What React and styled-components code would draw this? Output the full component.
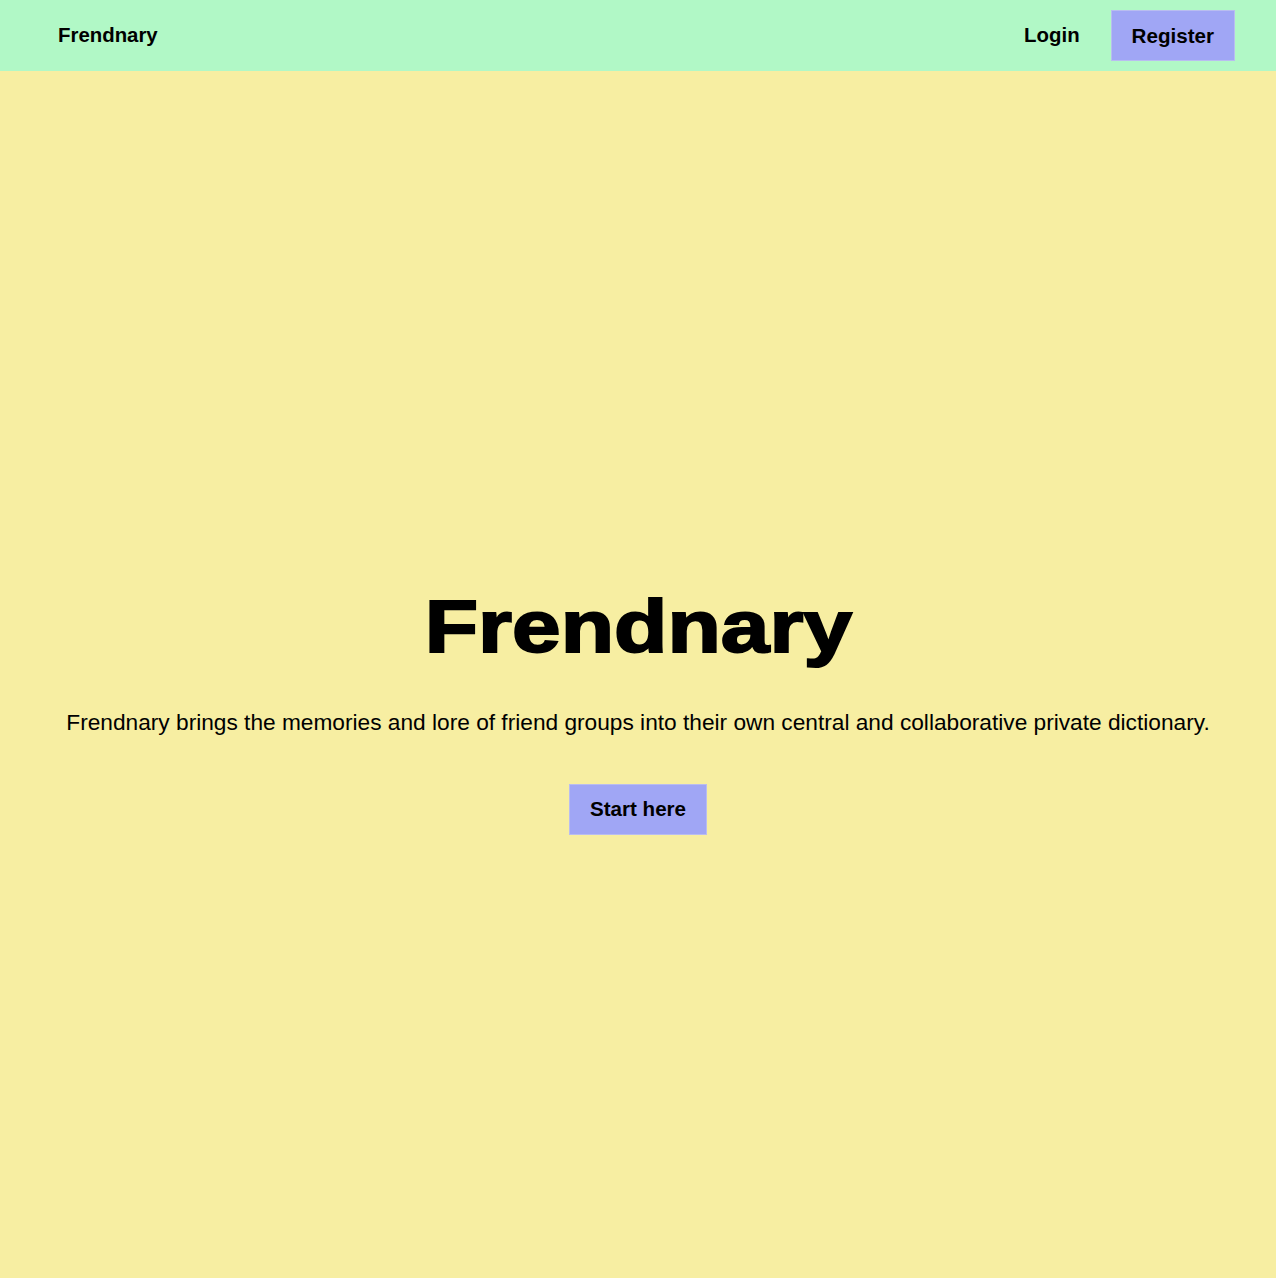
import React from 'react'
import styled, { createGlobalStyle } from 'styled-components'

const Global = createGlobalStyle`
  * { box-sizing: border-box; }
  body {
    margin: 0;
    background: #f7eea2;
    font-family: "Liberation Sans", Arial, sans-serif;
    color: #000;
  }
`

const App = () => {
  return (
    <>
      <Global />
      <Header>
        <Brand>Frendnary</Brand>
        <Nav>
          <NavLink>Login</NavLink>
          <Button>Register</Button>
        </Nav>
      </Header>
      <Hero>
        <Title>Frendnary</Title>
        <Tagline>
          Frendnary brings the memories and lore of friend groups into their own central and collaborative private dictionary.
        </Tagline>
        <Button>Start here</Button>
      </Hero>
    </>
  )
}

export default App

const Header = styled.header`
  height: 71px;
  background: #b1f8c6;
  display: flex;
  align-items: center;
  justify-content: space-between;
  padding: 0 41px 0 58px;
`
const Brand = styled.div`
  font-size: 20.4px;
  font-weight: 700;
`
const Nav = styled.nav`
  display: flex;
  align-items: center;
  gap: 11px;
`
const NavLink = styled.a`
  font-size: 20.4px;
  font-weight: 700;
  padding: 0 20px;
  cursor: pointer;
`
const Button = styled.button`
  font-family: inherit;
  font-size: 20.6px;
  font-weight: 700;
  color: #000;
  background: #a0a6f5;
  border: 1px solid #b9bdf0;
  height: 51px;
  padding: 0 20px;
  cursor: pointer;
`
const Hero = styled.main`
  min-height: 100vh;
  display: flex;
  flex-direction: column;
  align-items: center;
  justify-content: center;
  text-align: center;
  padding: 4px 40px 0;
`
const Title = styled.h1`
  margin: 0;
  display: inline-block;
  font-size: 75px;
  font-weight: 900;
  line-height: 1;
  -webkit-text-stroke: 2px #000;
  transform: scaleX(1.165);
`
const Tagline = styled.p`
  margin: 44px 0 46px;
  font-size: 22.7px;
  line-height: 1.3;
`
